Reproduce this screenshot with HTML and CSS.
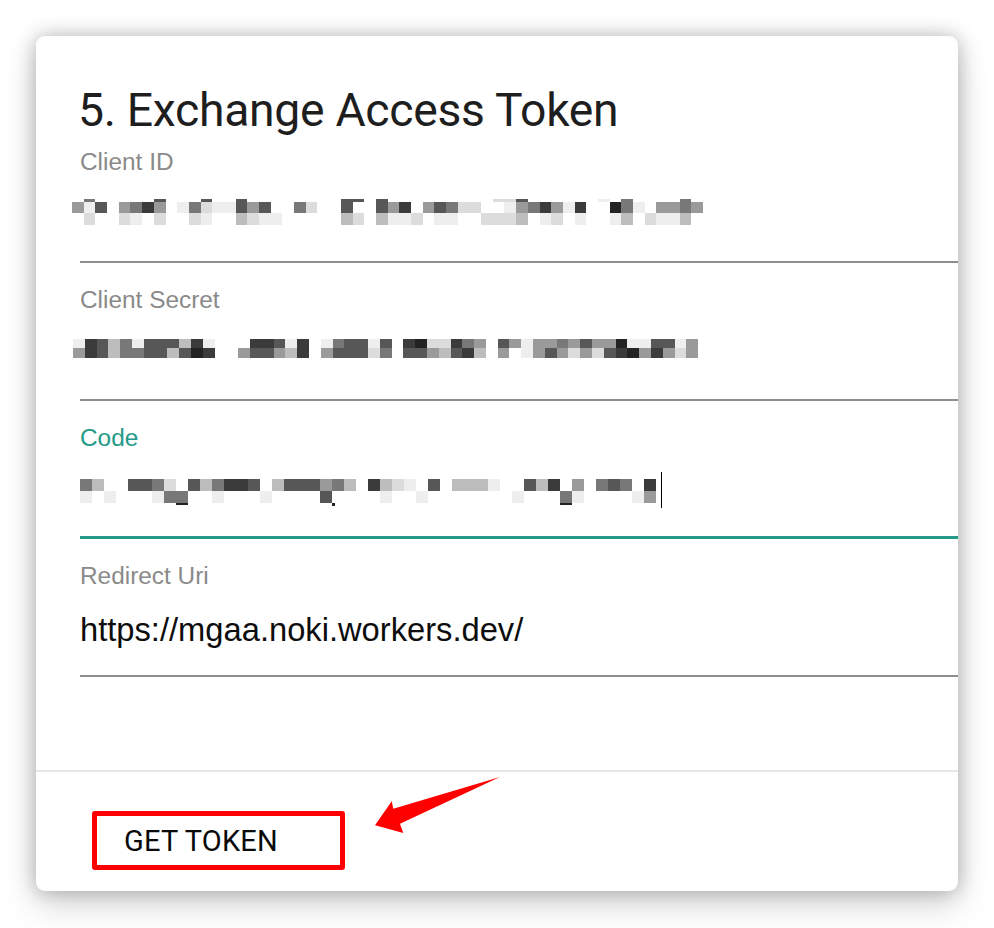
FILE: index.html
```html
<!DOCTYPE html>
<html lang="en">
<head>
<meta charset="utf-8">
<title>Exchange Access Token</title>
<link rel="stylesheet" href="styles.css">
</head>
<body>
<div class="card">
  <div class="card-body">
    <h1 class="title">5. Exchange Access Token</h1>

    <div class="field first">
      <div class="label">Client ID</div>
      <div class="value px px-id">
        <div class="row thin"><i class="b0"></i><i class="b5"></i><i class="b0"></i><i class="b0"></i><i class="b0"></i><i class="b0"></i><i class="b0"></i><i class="b6"></i><i class="b0"></i><i class="b0"></i><i class="b0"></i><i class="b6"></i><i class="b0"></i><i class="b0"></i><i class="b6"></i><i class="b0"></i><i class="b0"></i><i class="b0"></i><i class="b0"></i><i class="b0"></i><i class="b0"></i><i class="b0"></i><i class="b0"></i><i class="b6"></i><i class="b6"></i><i class="b0"></i><i class="b6"></i><i class="b0"></i><i class="b0"></i><i class="b0"></i><i class="b0"></i><i class="b0"></i><i class="b0"></i><i class="b0"></i><i class="b0"></i><i class="b0"></i><i class="b2"></i><i class="b2"></i><i class="b6"></i><i class="b0"></i><i class="b0"></i><i class="b0"></i><i class="b0"></i><i class="b0"></i><i class="b0"></i><i class="b1"></i><i class="b0"></i><i class="b5"></i><i class="b0"></i><i class="b0"></i><i class="b0"></i><i class="b0"></i><i class="b5"></i><i class="b0"></i></div>
        <div class="row main"><i class="b4"></i><i class="b1"></i><i class="b6"></i><i class="b0"></i><i class="b4"></i><i class="b5"></i><i class="b7"></i><i class="b4"></i><i class="b0"></i><i class="b1"></i><i class="b5"></i><i class="b2"></i><i class="b1"></i><i class="b1"></i><i class="b6"></i><i class="b4"></i><i class="b6"></i><i class="b0"></i><i class="b0"></i><i class="b5"></i><i class="b2"></i><i class="b0"></i><i class="b0"></i><i class="b6"></i><i class="b0"></i><i class="b0"></i><i class="b6"></i><i class="b4"></i><i class="b7"></i><i class="b0"></i><i class="b4"></i><i class="b6"></i><i class="b5"></i><i class="b2"></i><i class="b2"></i><i class="b0"></i><i class="b0"></i><i class="b1"></i><i class="b4"></i><i class="b5"></i><i class="b7"></i><i class="b4"></i><i class="b1"></i><i class="b7"></i><i class="b0"></i><i class="b0"></i><i class="b8"></i><i class="b5"></i><i class="b1"></i><i class="b0"></i><i class="b4"></i><i class="b4"></i><i class="b5"></i><i class="b4"></i></div>
        <div class="row low"><i class="b0"></i><i class="b2"></i><i class="b0"></i><i class="b0"></i><i class="b2"></i><i class="b1"></i><i class="b0"></i><i class="b2"></i><i class="b0"></i><i class="b0"></i><i class="b2"></i><i class="b1"></i><i class="b0"></i><i class="b0"></i><i class="b3"></i><i class="b2"></i><i class="b1"></i><i class="b1"></i><i class="b0"></i><i class="b0"></i><i class="b0"></i><i class="b0"></i><i class="b0"></i><i class="b3"></i><i class="b2"></i><i class="b0"></i><i class="b3"></i><i class="b1"></i><i class="b1"></i><i class="b2"></i><i class="b0"></i><i class="b1"></i><i class="b1"></i><i class="b0"></i><i class="b0"></i><i class="b2"></i><i class="b2"></i><i class="b2"></i><i class="b3"></i><i class="b0"></i><i class="b1"></i><i class="b2"></i><i class="b0"></i><i class="b1"></i><i class="b0"></i><i class="b0"></i><i class="b1"></i><i class="b3"></i><i class="b0"></i><i class="b2"></i><i class="b1"></i><i class="b1"></i><i class="b3"></i><i class="b0"></i></div>
      </div>
    </div>

    <div class="field">
      <div class="label">Client Secret</div>
      <div class="value px px-secret">
        <div class="row top"><i class="b1"></i><i class="b7"></i><i class="b6"></i><i class="b3"></i><i class="b5"></i><i class="b1"></i><i class="b6"></i><i class="b6"></i><i class="b6"></i><i class="b3"></i><i class="b7"></i><i class="b1"></i><i class="b0"></i><i class="b0"></i><i class="b0"></i><i class="b7"></i><i class="b7"></i><i class="b6"></i><i class="b1"></i><i class="b7"></i><i class="b0"></i><i class="b1"></i><i class="b5"></i><i class="b6"></i><i class="b6"></i><i class="b1"></i><i class="b6"></i><i class="b0"></i><i class="b7"></i><i class="b8"></i><i class="b2"></i><i class="b2"></i><i class="b7"></i><i class="b5"></i><i class="b4"></i><i class="b0"></i><i class="b6"></i><i class="b4"></i><i class="b1"></i><i class="b4"></i><i class="b4"></i><i class="b5"></i><i class="b4"></i><i class="b6"></i><i class="b4"></i><i class="b4"></i><i class="b8"></i><i class="b1"></i><i class="b1"></i><i class="b6"></i><i class="b6"></i><i class="b1"></i><i class="b4"></i></div>
        <div class="row bottom"><i class="b4"></i><i class="b7"></i><i class="b6"></i><i class="b3"></i><i class="b5"></i><i class="b5"></i><i class="b6"></i><i class="b6"></i><i class="b3"></i><i class="b6"></i><i class="b8"></i><i class="b7"></i><i class="b0"></i><i class="b0"></i><i class="b4"></i><i class="b6"></i><i class="b6"></i><i class="b4"></i><i class="b3"></i><i class="b7"></i><i class="b0"></i><i class="b4"></i><i class="b6"></i><i class="b6"></i><i class="b6"></i><i class="b2"></i><i class="b5"></i><i class="b0"></i><i class="b6"></i><i class="b6"></i><i class="b4"></i><i class="b3"></i><i class="b6"></i><i class="b7"></i><i class="b3"></i><i class="b0"></i><i class="b4"></i><i class="b0"></i><i class="b1"></i><i class="b4"></i><i class="b6"></i><i class="b4"></i><i class="b2"></i><i class="b4"></i><i class="b2"></i><i class="b6"></i><i class="b7"></i><i class="b8"></i><i class="b4"></i><i class="b7"></i><i class="b4"></i><i class="b2"></i><i class="b4"></i></div>
      </div>
    </div>

    <div class="field focused">
      <div class="label">Code</div>
      <div class="value px px-code">
        <div class="pxwrap">
          <div class="row main"><i class="b5"></i><i class="b3"></i><i class="b0"></i><i class="b0"></i><i class="b6"></i><i class="b6"></i><i class="b5"></i><i class="b2"></i><i class="b0"></i><i class="b6"></i><i class="b3"></i><i class="b5"></i><i class="b7"></i><i class="b7"></i><i class="b6"></i><i class="b0"></i><i class="b3"></i><i class="b6"></i><i class="b6"></i><i class="b6"></i><i class="b4"></i><i class="b5"></i><i class="b3"></i><i class="b0"></i><i class="b7"></i><i class="b3"></i><i class="b2"></i><i class="b1"></i><i class="b0"></i><i class="b6"></i><i class="b0"></i><i class="b3"></i><i class="b3"></i><i class="b3"></i><i class="b1"></i><i class="b0"></i><i class="b0"></i><i class="b6"></i><i class="b3"></i><i class="b7"></i><i class="b0"></i><i class="b4"></i><i class="b0"></i><i class="b5"></i><i class="b6"></i><i class="b5"></i><i class="b0"></i><i class="b7"></i></div>
          <div class="row low"><i class="b1"></i><i class="b0"></i><i class="b1"></i><i class="b0"></i><i class="b0"></i><i class="b0"></i><i class="b1"></i><i class="b5"></i><i class="b5"></i><i class="b0"></i><i class="b0"></i><i class="b1"></i><i class="b0"></i><i class="b0"></i><i class="b0"></i><i class="b1"></i><i class="b0"></i><i class="b0"></i><i class="b0"></i><i class="b0"></i><i class="b6"></i><i class="b0"></i><i class="b0"></i><i class="b0"></i><i class="b0"></i><i class="b1"></i><i class="b0"></i><i class="b0"></i><i class="b1"></i><i class="b0"></i><i class="b0"></i><i class="b0"></i><i class="b0"></i><i class="b0"></i><i class="b0"></i><i class="b0"></i><i class="b1"></i><i class="b0"></i><i class="b0"></i><i class="b0"></i><i class="b5"></i><i class="b1"></i><i class="b0"></i><i class="b0"></i><i class="b0"></i><i class="b0"></i><i class="b1"></i><i class="b4"></i></div>
          <div class="row under"><i class="b0"></i><i class="b0"></i><i class="b0"></i><i class="b0"></i><i class="b0"></i><i class="b0"></i><i class="b0"></i><i class="b0"></i><i class="b8"></i><i class="b0"></i><i class="b0"></i><i class="b0"></i><i class="b0"></i><i class="b0"></i><i class="b0"></i><i class="b0"></i><i class="b0"></i><i class="b0"></i><i class="b0"></i><i class="b0"></i><i class="b0"></i><i class="dot"></i><i class="b0"></i><i class="b0"></i><i class="b0"></i><i class="b0"></i><i class="b0"></i><i class="b0"></i><i class="b0"></i><i class="b0"></i><i class="b0"></i><i class="b0"></i><i class="b0"></i><i class="b0"></i><i class="b0"></i><i class="b0"></i><i class="b0"></i><i class="b0"></i><i class="b0"></i><i class="b0"></i><i class="b8"></i></div>
        </div>
        <span class="caret"></span>
      </div>
    </div>

    <div class="field">
      <div class="label">Redirect Uri</div>
      <div class="value text">https://mgaa.noki.workers.dev/</div>
    </div>
  </div>

  <div class="card-actions">
    <button class="btn" type="button">GET TOKEN</button>
    <svg class="arrow" width="140" height="70" viewBox="0 0 140 70" aria-hidden="true">
      <polygon points="9,53.3 25.7,29.3 27.3,36.7 134,5 34,51.7 37.3,61" fill="#ff0000"/>
    </svg>
  </div>
</div>
</body>
</html>
```
FILE: styles.css
```css
html, body {
  margin: 0;
  padding: 0;
  background: #ffffff;
}

body {
  padding: 36px 36px 37px 36px;
  font-family: "Liberation Sans", Arial, sans-serif;
}

.card {
  width: 922px;
  height: 855px;
  background: #ffffff;
  border-radius: 9px;
  box-shadow: 0 0 20px rgba(0, 0, 0, 0.26), 0 14px 34px rgba(0, 0, 0, 0.16);
  overflow: hidden;
  display: flex;
  flex-direction: column;
}

.card-body {
  padding: 46px 0 0 44px;
  height: 688px;
}

.title {
  margin: 0 0 0 -2px;
  font-family: Roboto, "Liberation Sans", sans-serif;
  font-weight: 400;
  font-size: 46.3px;
  line-height: 56px;
  color: #1e1e1e;
  letter-spacing: -0.3px;
}

.field {
  width: 920px;
  padding-top: 23px;
  padding-bottom: 25px;
  border-bottom: 2px solid #8e8e8e;
}

.field.first {
  padding-top: 10px;
}

.field.focused {
  border-bottom: 3px solid #249a88;
  padding-bottom: 24px;
}

.label {
  font-size: 24.4px;
  line-height: 28px;
  color: #8a8a8a;
}

.focused .label {
  color: #249a88;
}

.value {
  box-sizing: border-box;
  margin-top: 20px;
  height: 40px;
  font-size: 32.7px;
  line-height: 40px;
  color: #111111;
}

/* pixelated (redacted) values */
.px {
  display: flex;
  flex-direction: column;
}

.row {
  display: flex;
}

.row i {
  display: block;
  flex: none;
}

.b0 { background: transparent; }
.b1 { background: #eeeeee; }
.b2 { background: #dcdcdc; }
.b3 { background: #bdbdbd; }
.b4 { background: #9a9a9a; }
.b5 { background: #787878; }
.b6 { background: #575757; }
.b7 { background: #3b3b3b; }
.b8 { background: #232323; }

.px-id {
  padding-top: 3px;
  margin-left: -8px;
}
.px-id .row i { width: 11.7px; }
.px-id .thin i { height: 3px; }
.px-id .main i { height: 11px; }
.px-id .low i { height: 12px; }

.px-secret {
  padding-top: 5px;
  margin-left: -7px;
}
.px-secret .row i { width: 11.8px; }
.px-secret .top i { height: 9px; }
.px-secret .bottom i { height: 10px; }

.px-code {
  flex-direction: row;
  align-items: flex-start;
  padding-top: 7px;
}
.pxwrap {
  display: flex;
  flex-direction: column;
}
.px-code .row i { width: 12px; }
.px-code .main i { height: 12px; }
.px-code .low i { height: 12px; }
.px-code .under i { height: 2px; }
.px-code .under .dot {
  width: 3px;
  height: 3px;
  margin-right: 9px;
  background: #222;
}

.caret {
  display: block;
  width: 1px;
  height: 36px;
  margin-top: -7px;
  margin-left: 5px;
  background: #000000;
}

.value.text {
  color: #0d0d0d;
}

.card-actions {
  position: relative;
  border-top: 2px solid #e6e6e6;
  padding: 39px 0 0 56px;
  flex: 1;
}

.btn {
  display: flex;
  align-items: center;
  box-sizing: border-box;
  width: 253px;
  height: 59px;
  padding: 0 0 0 27px;
  margin: 0;
  border: 5px solid #ff0000;
  border-radius: 3px;
  background: #ffffff;
  font-family: Roboto, "Liberation Sans", sans-serif;
  font-size: 29px;
  font-weight: 400;
  color: #0a0a0a;
  letter-spacing: 0.2px;
}

.arrow {
  position: absolute;
  left: 330px;
  top: 0;
  overflow: visible;
}
```
